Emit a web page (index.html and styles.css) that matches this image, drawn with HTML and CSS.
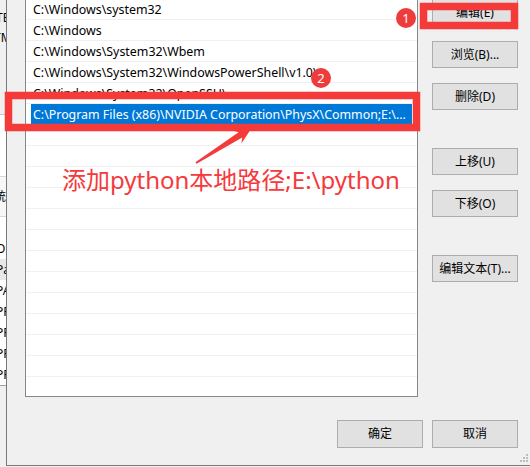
FILE: index.html
```html
<!DOCTYPE html>
<html lang="zh-CN">
<head>
<meta charset="utf-8">
<title>编辑环境变量</title>
<link rel="stylesheet" href="styles.css">
</head>
<body>
<div class="bgwin">
  <div class="bg-top">
    <div class="frag frag-e">TE</div>
    <div class="frag frag-m">TM</div>
  </div>
  <div class="bg-table">
    <div class="bg-blank"></div>
    <div class="bg-head"><span class="cut">系统</span></div>
    <div class="bg-row"><span class="cut">变</span></div>
    <div class="bg-row"><span class="cut2">O:</span></div>
    <div class="bg-row bg-sel"><span class="cut2">Pa</span></div>
    <div class="bg-row"><span class="cut2">PA</span></div>
    <div class="bg-row"><span class="cut2">PR</span></div>
    <div class="bg-row"><span class="cut2">PR</span></div>
    <div class="bg-row"><span class="cut2">PR</span></div>
    <div class="bg-row"><span class="cut2">PR</span></div>
  </div>
</div>

<div class="dialog">
  <div class="main">
    <div class="listbox">
      <div class="row"><div class="cell">C:\Windows\system32</div></div>
      <div class="row"><div class="cell">C:\Windows</div></div>
      <div class="row"><div class="cell">C:\Windows\System32\Wbem</div></div>
      <div class="row"><div class="cell">C:\Windows\System32\WindowsPowerShell\v1.0\</div></div>
      <div class="row"><div class="cell">C:\Windows\System32\OpenSSH\</div></div>
      <div class="row"><div class="cell selected">C:\Program Files (x86)\NVIDIA Corporation\PhysX\Common;E:\...</div></div>
      <div class="row"><div class="cell"></div></div>
      <div class="row"><div class="cell"></div></div>
      <div class="row"><div class="cell"></div></div>
      <div class="row"><div class="cell"></div></div>
      <div class="row"><div class="cell"></div></div>
      <div class="row"><div class="cell"></div></div>
      <div class="row"><div class="cell"></div></div>
      <div class="row"><div class="cell"></div></div>
      <div class="row"><div class="cell"></div></div>
      <div class="row"><div class="cell"></div></div>
      <div class="row"><div class="cell"></div></div>
      <div class="row"><div class="cell"></div></div>
      <div class="row last"><div class="cell"></div></div>
    </div>
    <div class="buttons">
      <div class="group">
        <button class="btn">编辑(E)</button>
        <button class="btn">浏览(B)...</button>
        <button class="btn">删除(D)</button>
      </div>
      <div class="group">
        <button class="btn">上移(U)</button>
        <button class="btn">下移(O)</button>
      </div>
      <div class="group">
        <button class="btn">编辑文本(T)...</button>
      </div>
    </div>
  </div>
  <div class="footer">
    <button class="btn btn-lg">确定</button>
    <button class="btn btn-lg">取消</button>
  </div>
  <svg class="grip" width="12" height="12" viewBox="0 0 12 12">
    <rect x="8" y="2" width="2" height="2"/>
    <rect x="5" y="5" width="2" height="2"/>
    <rect x="8" y="5" width="2" height="2"/>
    <rect x="2" y="8" width="2" height="2"/>
    <rect x="5" y="8" width="2" height="2"/>
    <rect x="8" y="8" width="2" height="2"/>
  </svg>
</div>

<svg class="overlay" width="530" height="467" viewBox="0 0 530 467">
  <rect class="mark" x="423.5" y="6.5" width="91" height="19"/>
  <rect class="mark" x="8.5" y="95.5" width="408" height="32"/>
  <polygon class="arrow" points="253,126 232.6,130.4 238.6,132.2 195.4,162.2 196.6,163.8 242.2,137.4 241.4,143.6"/>
  <circle class="badge" cx="406" cy="18" r="10"/>
  <text class="badge-num" x="406" y="22.5">1</text>
  <circle class="badge" cx="321" cy="78" r="10"/>
  <text class="badge-num" x="321" y="82.5">2</text>
</svg>
<div class="note">添加python本地路径;E:\python</div>
</body>
</html>
```

FILE: styles.css
```css
* { box-sizing: border-box; }

html, body {
  margin: 0;
  padding: 0;
}

body {
  width: 530px;
  height: 467px;
  overflow: hidden;
  position: relative;
  display: flex;
  align-items: flex-start;
  background: #f0f0f0;
  font-family: "Noto Sans", "Noto Sans CJK SC", sans-serif;
  font-size: 12px;
  color: #000;
}

/* window behind the dialog */
.bgwin {
  width: 6px;
  flex: none;
  height: 467px;
  overflow: hidden;
  background: #f0f0f0;
}
.bg-top {
  height: 114px;
  padding-top: 8px;
}
.frag {
  height: 20px;
  line-height: 20px;
  white-space: nowrap;
  text-indent: -4px;
}
.frag-m { text-indent: -6px; }
.bg-table {
  border-top: 1px solid #c8c8c8;
  border-bottom: 1px solid #a0a0a0;
  background: #fff;
}
.bg-blank {
  height: 62px;
  border-bottom: 1px solid #d8d8d8;
}
.bg-head {
  height: 40px;
  line-height: 40px;
  white-space: nowrap;
  background: #f7f7f7;
  border-bottom: 1px solid #d8d8d8;
}
.bg-row {
  height: 21px;
  line-height: 21px;
  white-space: nowrap;
}
.bg-sel { background: #e8e8e8; }
.cut { margin-left: -18px; }
.cut2 { margin-left: -4px; }

/* dialog */
.dialog {
  flex: 1;
  height: 466px;
  position: relative;
  background: #f0f0f0;
  border-left: 1px solid #7a7a7a;
  border-bottom: 1px solid #7a7a7a;
}
.main {
  display: flex;
  gap: 14px;
  padding-left: 18px;
  margin-top: -2px;
}
.listbox {
  width: 393px;
  height: 399px;
  flex: none;
  overflow: hidden;
  background: #fff;
  border: 1px solid #828790;
}
.row {
  height: 21px;
  border-bottom: 1px solid #f0f0f0;
}
.row.last { border-bottom: 0; }
.cell {
  height: 20px;
  line-height: 21px;
  margin: 0 5px;
  padding-left: 2px;
  font-size: 12.4px;
  white-space: nowrap;
  overflow: hidden;
  color: #000;
}
.cell.selected {
  background: #0078d7;
  color: #fff;
}

.buttons {
  width: 86px;
  flex: none;
  display: flex;
  flex-direction: column;
  gap: 38px;
  margin-top: 1px;
}
.group {
  display: flex;
  flex-direction: column;
  gap: 15px;
}
.btn {
  width: 86px;
  height: 27px;
  padding: 0;
  margin: 0;
  background: #e1e1e1;
  border: 1px solid #adadad;
  border-radius: 0;
  font-family: "Noto Sans", "Noto Sans CJK SC", sans-serif;
  font-size: 12px;
  color: #000;
  line-height: 25px;
  text-align: center;
  white-space: nowrap;
}
.btn-lg { height: 28px; line-height: 26px; }

.footer {
  display: flex;
  justify-content: flex-end;
  gap: 9px;
  margin-top: 23px;
  padding-right: 12px;
}

.grip {
  position: absolute;
  right: 0;
  bottom: 1px;
  fill: #bdbdbd;
}

/* annotations */
.overlay {
  position: absolute;
  left: 0;
  top: 0;
  pointer-events: none;
}
.mark {
  fill: none;
  stroke: #f53a3a;
  stroke-width: 7.5;
}
.arrow { fill: #f53a3a; }
.badge { fill: #ee3b3b; }
.badge-num {
  fill: #fff;
  font-family: "Noto Sans", sans-serif;
  font-size: 13px;
  text-anchor: middle;
}
.note {
  position: absolute;
  left: 62px;
  top: 166px;
  font-family: "Noto Sans", "Noto Sans CJK SC", sans-serif;
  font-size: 24px;
  line-height: 28px;
  color: #f5393c;
  white-space: nowrap;
}
```
